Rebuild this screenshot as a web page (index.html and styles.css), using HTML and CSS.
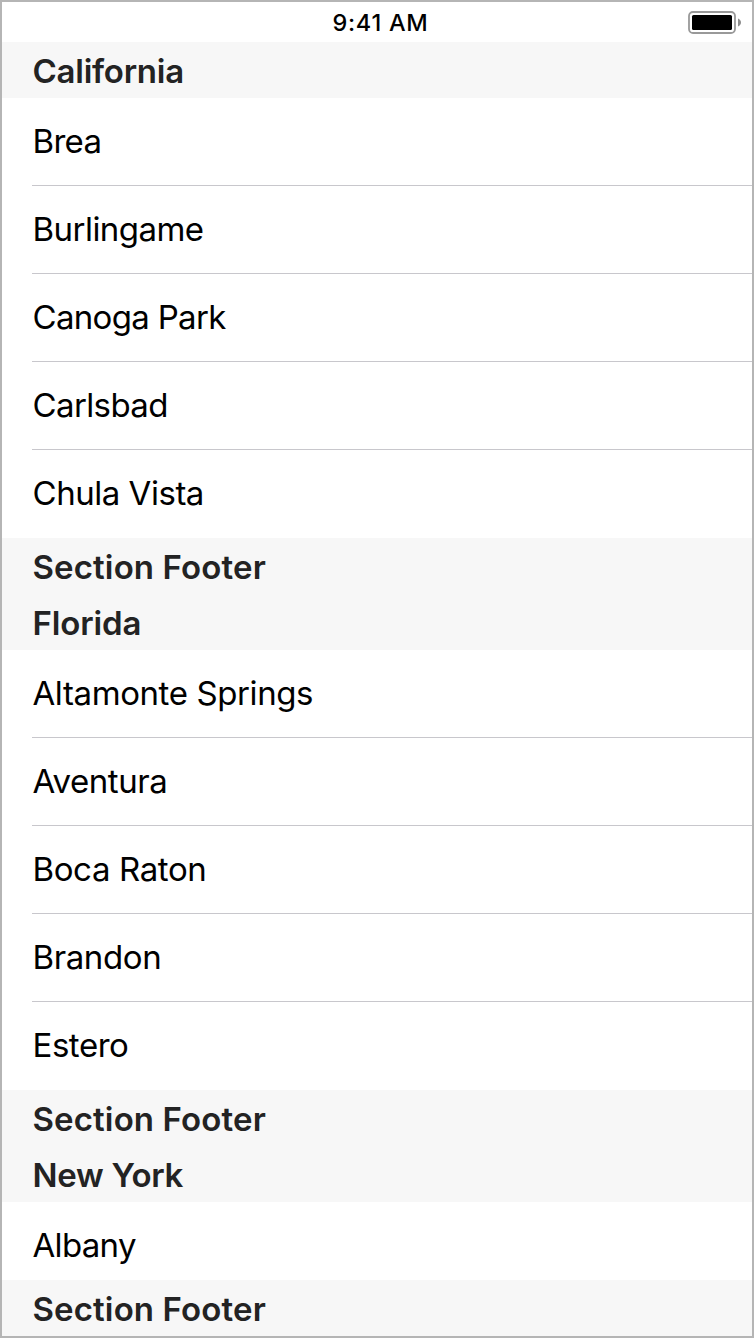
FILE: index.html
```html
<!DOCTYPE html>
<html lang="en">
<head>
<meta charset="utf-8">
<title>Cities</title>
<link rel="stylesheet" href="styles.css">
</head>
<body>
<main class="screen">
  <header class="status">
    <span class="time">9:41 AM</span>
    <svg class="battery" width="54" height="24" viewBox="0 0 54 24">
      <rect x="1" y="1" width="46" height="21" rx="4" fill="none" stroke="#999" stroke-width="1.8"/>
      <rect x="4" y="4" width="40" height="15" rx="1.500" fill="#000"/>
      <path d="M50 7.500v8c4-1.500 4-6.500 0-8z" fill="#8e8e8e"/>
    </svg>
  </header>
  <div class="list">
    <h2 class="band"><span class="w-california">California</span></h2>
    <ul class="rows">
      <li><span class="w-brea">Brea</span></li>
      <li><span class="w-burlingame">Burlingame</span></li>
      <li><span class="w-canoga">Canoga Park</span></li>
      <li><span class="w-carlsbad">Carlsbad</span></li>
      <li><span class="w-chula">Chula Vista</span></li>
    </ul>
    <div class="band"><span class="w-footer">Section Footer</span></div>
    <h2 class="band"><span class="w-florida">Florida</span></h2>
    <ul class="rows">
      <li><span class="w-altamonte">Altamonte Springs</span></li>
      <li><span class="w-aventura">Aventura</span></li>
      <li><span class="w-boca">Boca Raton</span></li>
      <li><span class="w-brandon">Brandon</span></li>
      <li><span class="w-estero">Estero</span></li>
    </ul>
    <div class="band"><span class="w-footer">Section Footer</span></div>
    <h2 class="band"><span class="w-newyork">New York</span></h2>
    <ul class="rows rows-cut">
      <li><span class="w-albany">Albany</span></li>
    </ul>
    <div class="band"><span class="w-footer">Section Footer</span></div>
  </div>
</main>
</body>
</html>
```
FILE: styles.css
```css
* { box-sizing: border-box; }
body { margin: 0; background: #fff; color: #000; font-family: Inter, "Liberation Sans", sans-serif; }
.screen { width: 754px; height: 1338px; overflow: hidden; border: 2px solid #b5b5b5; background: #fff; }
.status { height: 40px; display: grid; grid-template-columns: 1fr auto 1fr; align-items: center; padding: 2px 10px 0 0; }
.time { grid-column: 2; font-size: 23.5px; font-weight: 500; letter-spacing: 0.75px; padding: 0 0 2px 17px; }
.battery { justify-self: end; }
.band { margin: 0; height: 56px; padding: 1px 30.5px 0; display: flex; align-items: center; background: #f7f7f7; color: #232323; font-size: 33px; font-weight: 600; line-height: 40px; }
.rows { list-style: none; margin: 0; padding: 0 0 0 30px; }
.rows li { height: 88px; padding: 0 0 2px 0.5px; display: flex; align-items: center; font-size: 33px; line-height: 40px; border-bottom: 1px solid #c8c7cc; }
.rows li:last-child { border-bottom-color: transparent; }
.rows-cut { height: 78px; overflow: hidden; }

/* Optical tracking per label */
.w-california { letter-spacing: -0.25px; }
.w-florida { letter-spacing: -0.15px; }
.w-newyork { letter-spacing: -0.28px; }
.w-footer { letter-spacing: 0.13px; }
.w-brea { letter-spacing: -0.7px; }
.w-burlingame { letter-spacing: -0.54px; }
.w-canoga { letter-spacing: -0.68px; }
.w-carlsbad { letter-spacing: -0.62px; }
.w-chula { letter-spacing: -0.47px; }
.w-altamonte { letter-spacing: -0.4px; }
.w-aventura { letter-spacing: -0.46px; }
.w-boca { letter-spacing: -0.38px; }
.w-brandon { letter-spacing: -0.4px; }
.w-estero { letter-spacing: -0.45px; }
.w-albany { letter-spacing: -0.68px; }
```
